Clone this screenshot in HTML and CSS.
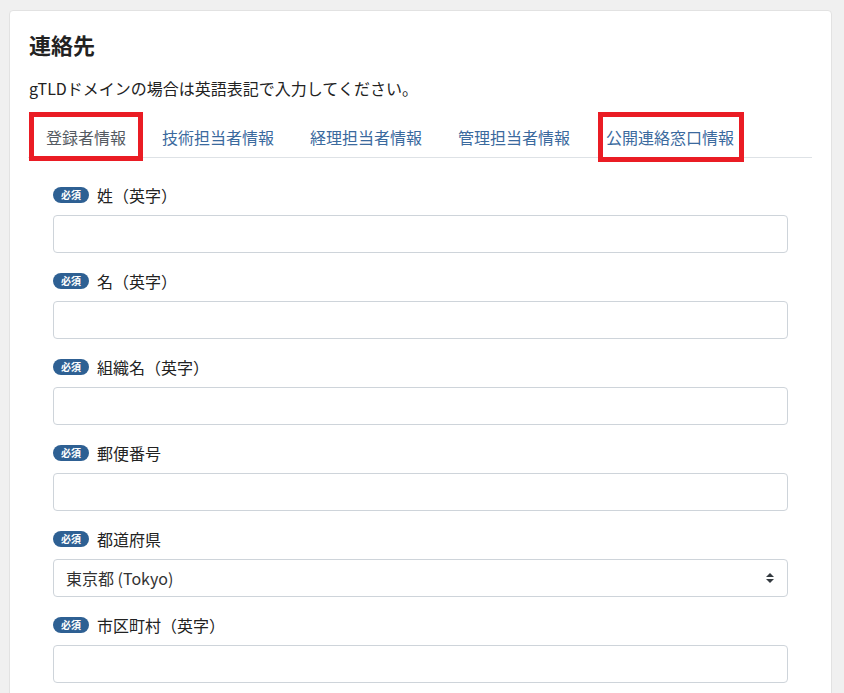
FILE: index.html
```html
<!DOCTYPE html>
<html lang="ja">
<head>
<meta charset="utf-8">
<title>連絡先</title>
<link rel="stylesheet" href="styles.css">
</head>
<body>
<div class="card">
  <h2 class="card-title">連絡先</h2>
  <p class="note">gTLDドメインの場合は英語表記で入力してください。</p>
  <ul class="tabs">
    <li class="tab active"><span class="tab-link">登録者情報</span><span class="mark mark-1"></span></li>
    <li class="tab"><span class="tab-link">技術担当者情報</span></li>
    <li class="tab"><span class="tab-link">経理担当者情報</span></li>
    <li class="tab"><span class="tab-link">管理担当者情報</span></li>
    <li class="tab"><span class="tab-link">公開連絡窓口情報</span><span class="mark mark-5"></span></li>
  </ul>
  <form class="form">
    <div class="field">
      <label class="label"><span class="badge">必須</span>姓（英字）</label>
      <input class="input" type="text">
    </div>
    <div class="field">
      <label class="label"><span class="badge">必須</span>名（英字）</label>
      <input class="input" type="text">
    </div>
    <div class="field">
      <label class="label"><span class="badge">必須</span>組織名（英字）</label>
      <input class="input" type="text">
    </div>
    <div class="field">
      <label class="label"><span class="badge">必須</span>郵便番号</label>
      <input class="input" type="text">
    </div>
    <div class="field">
      <label class="label"><span class="badge">必須</span>都道府県</label>
      <div class="select">
        <span class="select-value">東京都 (Tokyo)</span>
        <svg class="select-arrow" width="8" height="10" viewBox="0 0 4 5"><path d="M2 0L0 2h4zm0 5L0 3h4z" fill="#343a40"/></svg>
      </div>
    </div>
    <div class="field">
      <label class="label"><span class="badge">必須</span>市区町村（英字）</label>
      <input class="input" type="text">
    </div>
  </form>
</div>
</body>
</html>
```
FILE: styles.css
```css
* { box-sizing: border-box; }
html, body { margin: 0; padding: 0; }
body {
  background: #f0f0f0;
  font-family: "Noto Sans CJK JP", "Noto Sans", sans-serif;
  color: #212529;
  height: 693px;
  overflow: hidden;
}
.card {
  margin: 10px 12px 0 9px;
  background: #fff;
  border: 1px solid #e2e2e2;
  border-radius: 4px;
  padding: 19px 19px 40px 19px;
  min-height: 800px;
}
.card-title {
  margin: 0 0 18px 0;
  font-size: 22px;
  line-height: 28px;
  font-weight: 700;
  color: #222;
}
.note {
  margin: 0 0 17px 0;
  font-size: 16px;
  line-height: 24px;
  color: #222;
}
.tabs {
  list-style: none;
  margin: 0 0 0 -1px;
  padding: 0;
  display: flex;
  border-bottom: 1px solid #dee2e6;
}
.tab {
  position: relative;
  padding: 8px 18px;
  font-size: 16px;
  line-height: 24px;
  color: #3b6a9e;
}
.tab.active .tab-link { color: #555b62; }
.mark {
  position: absolute;
  border: 5px solid #ea1c24;
  pointer-events: none;
}
.mark-1 { left: 1px; right: 1px; top: -5px; bottom: -4px; }
.mark-5 { left: 10px; right: 8px; top: -5px; bottom: -5px; }
.form {
  padding: 25px 24px 0 24px;
}
.field { margin-bottom: 16px; }
.label {
  display: flex;
  align-items: center;
  font-size: 16px;
  line-height: 24px;
  margin-bottom: 8px;
  color: #222;
}
.badge {
  display: inline-flex;
  align-items: center;
  justify-content: center;
  width: 36px;
  height: 16px;
  border-radius: 8px;
  background: #2e6093;
  color: #fff;
  font-size: 10px;
  font-weight: 700;
  margin-right: 8px;
}
.input, .select {
  display: block;
  width: 100%;
  height: 38px;
  border: 1px solid #ced4da;
  border-radius: 4px;
  background: #fff;
  font: inherit;
}
.select {
  display: flex;
  align-items: center;
  justify-content: space-between;
  padding: 0 13px 0 12px;
  font-size: 16px;
  color: #333;
}
.select-arrow { display: block; }
```
